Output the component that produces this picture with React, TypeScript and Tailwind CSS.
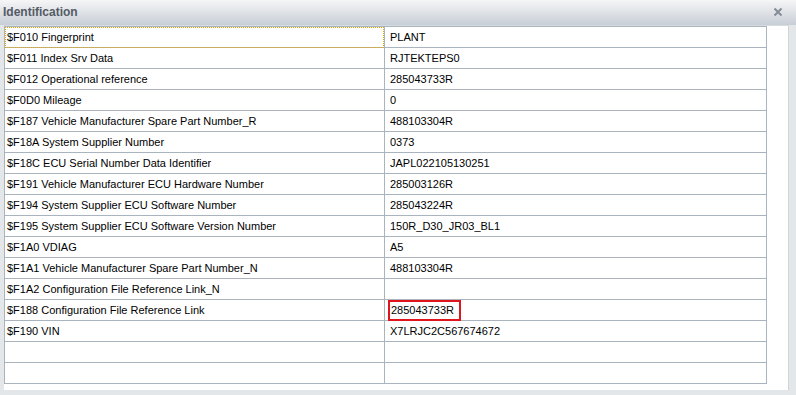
import React from "react";

type Row = { id: string; label: string; value: string; highlight?: boolean };

const rows: Row[] = [
  { id: "$F010", label: "Fingerprint", value: "PLANT" },
  { id: "$F011", label: "Index Srv Data", value: "RJTEKTEPS0" },
  { id: "$F012", label: "Operational reference", value: "285043733R" },
  { id: "$F0D0", label: "Mileage", value: "0" },
  { id: "$F187", label: "Vehicle Manufacturer Spare Part Number_R", value: "488103304R" },
  { id: "$F18A", label: "System Supplier Number", value: "0373" },
  { id: "$F18C", label: "ECU Serial Number Data Identifier", value: "JAPL022105130251" },
  { id: "$F191", label: "Vehicle Manufacturer ECU Hardware Number", value: "285003126R" },
  { id: "$F194", label: "System Supplier ECU Software Number", value: "285043224R" },
  { id: "$F195", label: "System Supplier ECU Software Version Number", value: "150R_D30_JR03_BL1" },
  { id: "$F1A0", label: "VDIAG", value: "A5" },
  { id: "$F1A1", label: "Vehicle Manufacturer Spare Part Number_N", value: "488103304R" },
  { id: "$F1A2", label: "Configuration File Reference Link_N", value: "" },
  { id: "$F188", label: "Configuration File Reference Link", value: "285043733R", highlight: true },
  { id: "$F190", label: "VIN", value: "X7LRJC2C567674672" },
];

const CloseIcon = () => (
  <svg width="10" height="10" viewBox="0 0 10 10">
    <path d="M1.5 1.5 L8.5 8.5 M8.5 1.5 L1.5 8.5" stroke="#858c95" strokeWidth="2" />
  </svg>
);

export default function App() {
  const empty = 17 - rows.length;

  return (
    <div className="w-[796px] h-[395px] bg-[#e4e7ea] overflow-hidden font-['Liberation_Sans',Arial,sans-serif] text-[11px] text-black">
      {/* title bar */}
      <div className="h-[25px] flex items-center justify-between pl-[3px] pr-[13px] pb-[2px] bg-gradient-to-b from-[#f6f6f7] to-[#c8ced6]">
        <span className="text-[12px] font-bold text-[#545b64]">Identification</span>
        <CloseIcon />
      </div>

      <div className="h-[365px] ml-[4px] mr-[7px] bg-white border-t border-t-[#d6dbe0] border-r border-r-[#d0d5da]">
        <div className="w-[763px] border-t border-l border-r border-[#a9b4bf]">
          {rows.map((r, i) => (
            <div key={r.id} className="flex h-[21px] border-b border-[#a9b4bf]">
              <div className="relative w-[380px] flex items-center pl-[2px] border-r border-[#a9b4bf]">
                {i === 0 && (
                  <div className="absolute inset-0 -bottom-[1px] border border-dotted border-[#e6a700]" />
                )}
                <span>
                  {r.id} {r.label}
                </span>
              </div>
              <div className="flex-1 flex items-center pl-[5px]">
                {r.highlight ? (
                  <span className="-ml-[2px] h-[21px] flex items-center w-[73px] pl-[1px] border-2 border-[#e0141c]">
                    {r.value}
                  </span>
                ) : (
                  <span>{r.value}</span>
                )}
              </div>
            </div>
          ))}
          {Array.from({ length: empty }).map((_, i) => (
            <div key={i} className="flex h-[21px] border-b border-[#a9b4bf]">
              <div className="w-[380px] border-r border-[#a9b4bf]" />
              <div className="flex-1" />
            </div>
          ))}
        </div>
      </div>
    </div>
  );
}
